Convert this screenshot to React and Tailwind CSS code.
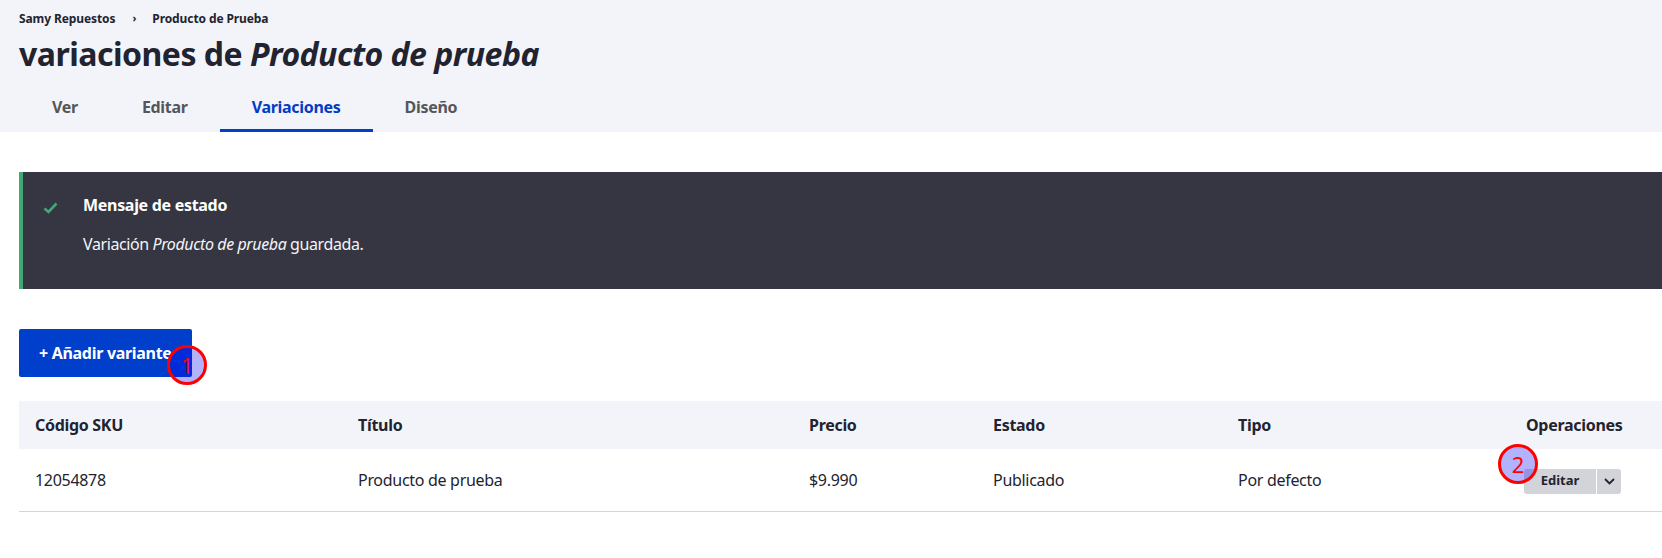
export default function App() {
  const tabs = ["Ver", "Editar", "Variaciones", "Diseño"];
  const cols = ["Código SKU", "Título", "Precio", "Estado", "Tipo", "Operaciones"];

  return (
    <div className="min-h-[558px] bg-white text-[#222330] font-['Noto_Sans',sans-serif] tracking-[-0.3px]">
      {/* HEADER */}
      <div className="bg-[#f3f4f9] pl-[19px] pt-[10px]">
        <div className="flex items-center text-[12px] font-bold h-[17px] text-[#222330] tracking-[-0.1px]">
          <span>Samy Repuestos</span>
          <span className="ml-[17px] mr-[16px] text-[11px]">›</span>
          <span>Producto de Prueba</span>
        </div>
        <h1 className="text-[32px] leading-[46px] font-bold mt-[4px] tracking-[-0.5px]">
          variaciones de <em>Producto de prueba</em>
        </h1>
        <div className="flex mt-[8px] pl-px">
          {tabs.map((t) => (
            <div
              key={t}
              className={
                "h-[47px] px-[32px] flex items-center text-[16px] font-bold border-b-[3px] " +
                (t === "Variaciones"
                  ? "text-[#003cc5] border-[#003ecc]"
                  : "text-[#55565b] border-transparent")
              }
            >
              {t}
            </div>
          ))}
        </div>
      </div>

      {/* CONTENT */}
      <div className="pl-[19px] pt-[40px]">
        {/* STATUS MESSAGE */}
        <div className="h-[117px] bg-[#353641] border-l-[4px] border-[#42a877] flex text-white">
          <div className="pt-[30px] pl-[20px] w-[60px]">
            <svg width="15" height="12" viewBox="0 0 15 12">
              <path d="M1.5 6.5 L5.5 10 L13.5 1.5" fill="none" stroke="#42a877" strokeWidth="2.6" />
            </svg>
          </div>
          <div className="pt-[21px]">
            <div className="text-[16px] font-bold leading-[24px]">Mensaje de estado</div>
            <div className="text-[16px] leading-[24px] mt-[15px] text-[#f3f4f9] tracking-[-0.4px]">
              Variación <em>Producto de prueba</em> guardada.
            </div>
          </div>
        </div>

        {/* ADD BUTTON */}
        <div className="mt-[40px] relative w-fit">
          <button className="h-[48px] px-[20px] bg-[#003ecc] text-white text-[16px] font-bold rounded-[2px]">
            + Añadir variante
          </button>
          <div className="absolute left-[148px] top-[16px] w-[40px] h-[40px] rounded-full border-[3px] border-[#ff0000] bg-[#0000ff]/30 flex items-center justify-center text-[#ff0000] text-[22px] leading-none">
            1
          </div>
        </div>

        {/* TABLE */}
        <div className="mt-[24px]">
          <div className="grid grid-cols-[323px_451px_184px_245px_288px_1fr] bg-[#f3f4f9] h-[48px] items-center text-[16px] font-bold">
            {cols.map((c) => (
              <div key={c} className="px-[16px]">{c}</div>
            ))}
          </div>
          <div className="grid grid-cols-[323px_451px_184px_245px_288px_1fr] h-[63px] items-center text-[16px] border-b border-[#d3d4d9]">
            <div className="px-[16px]">12054878</div>
            <div className="px-[16px]">Producto de prueba</div>
            <div className="px-[16px]">$9.990</div>
            <div className="px-[16px]">Publicado</div>
            <div className="px-[16px]">Por defecto</div>
            <div className="px-[14px] relative">
              <div className="flex w-[97px] h-[25px] bg-[#d3d4d9] rounded-[3px] text-[13px] font-bold mt-[2px] tracking-normal">
                <span className="flex-1 flex items-center justify-center border-r border-white">Editar</span>
                <span className="w-[24px] flex items-center justify-center">
                  <svg width="11" height="7" viewBox="0 0 11 7">
                    <path d="M1 1 L5.5 5.5 L10 1" fill="none" stroke="#222330" strokeWidth="1.8" />
                  </svg>
                </span>
              </div>
              <div className="absolute left-[-12px] top-[-23px] w-[40px] h-[40px] rounded-full border-[3px] border-[#ff0000] bg-[#0000ff]/30 flex items-center justify-center text-[#ff0000] text-[22px] leading-none">
                2
              </div>
            </div>
          </div>
        </div>
      </div>
    </div>
  );
}
